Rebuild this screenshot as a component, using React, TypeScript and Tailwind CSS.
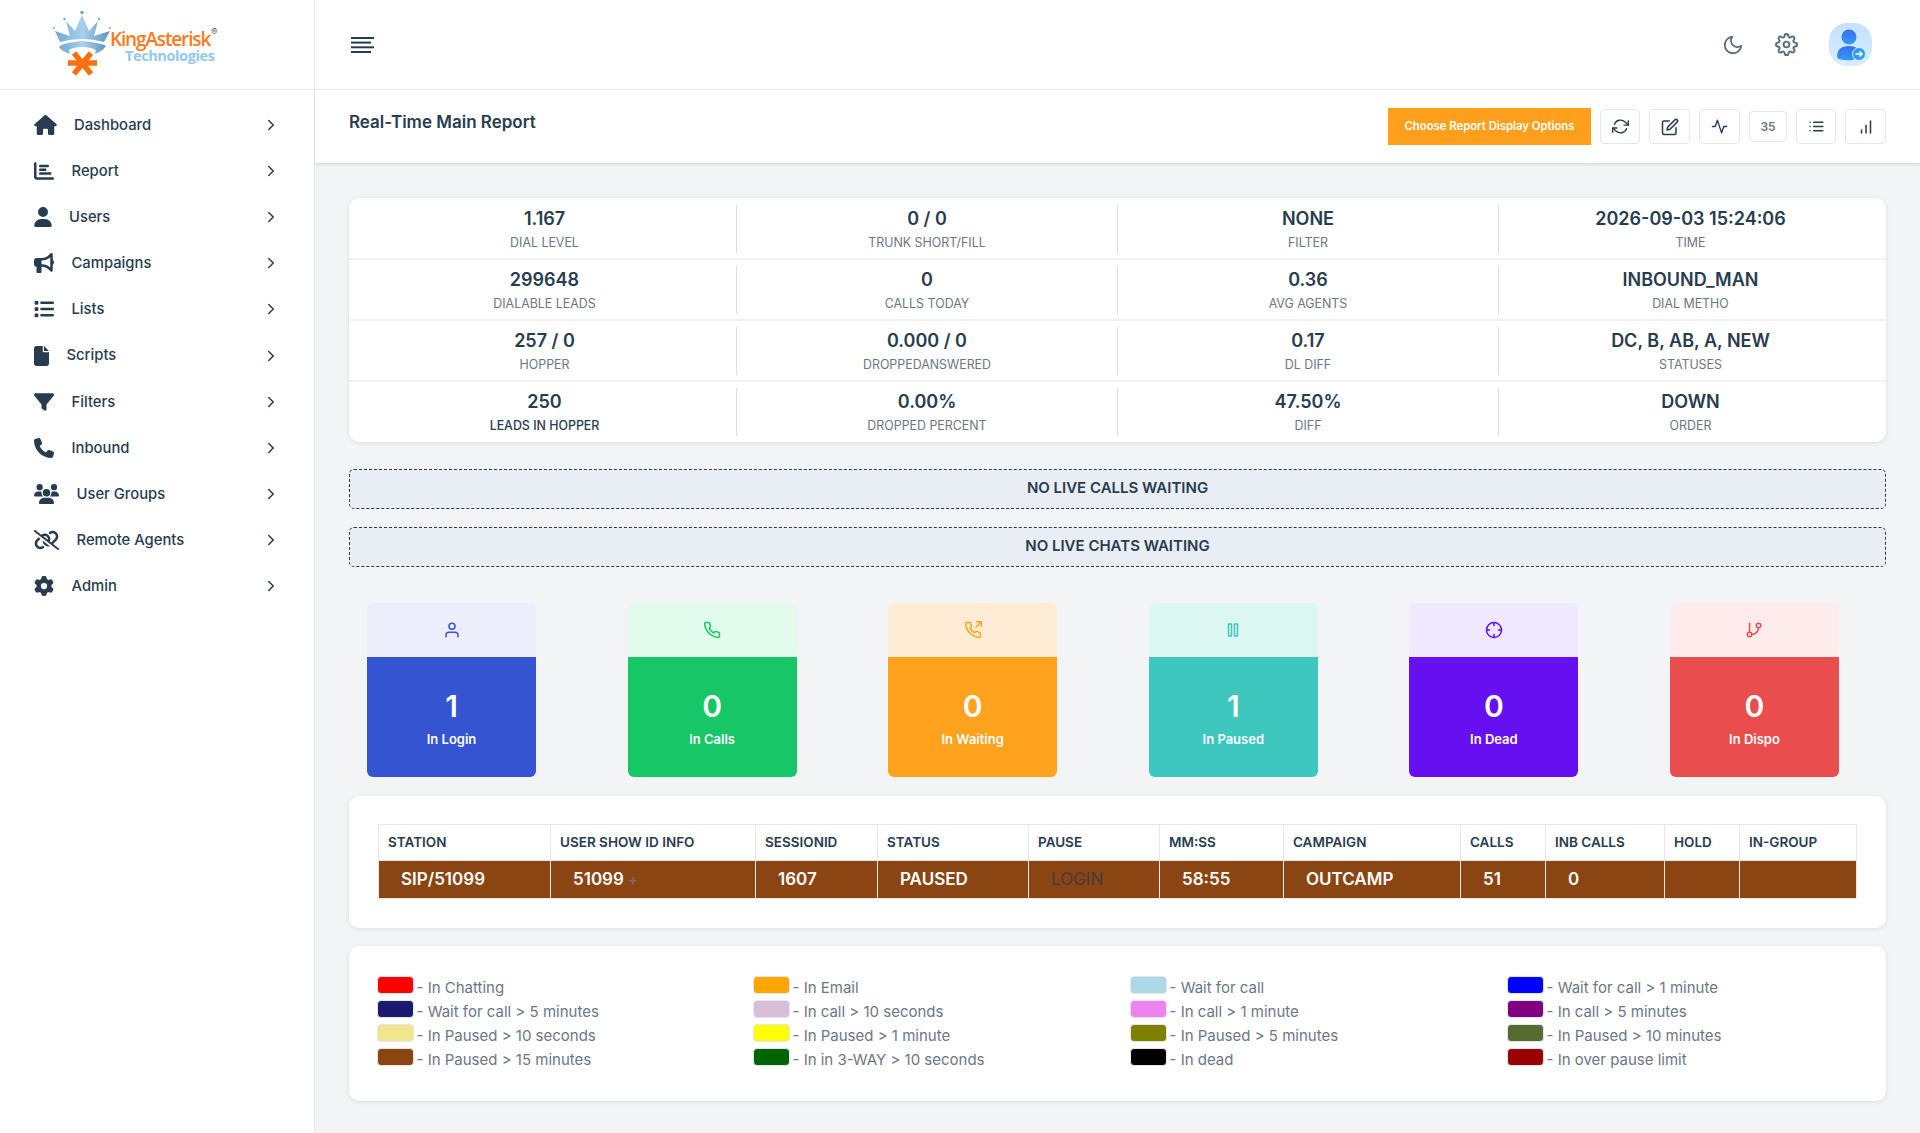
import { ChevronRight } from 'lucide-react';
import {
  FaBullhorn, FaChartBar, FaFile, FaFilter, FaGear, FaHouse, FaLinkSlash, FaList, FaPhone, FaUser, FaUsers,
} from 'react-icons/fa6';
import {
  FiActivity, FiBarChart, FiCrosshair, FiEdit, FiGitBranch, FiList, FiMoon, FiPause, FiPhone,
  FiPhoneOutgoing, FiRefreshCw, FiSettings, FiUser,
} from 'react-icons/fi';

const menu = [
  { label: 'Dashboard', icon: <FaHouse className="h-[20px] w-[23px]" />, textClass: 'ml-[40px]' },
  { label: 'Report', icon: <FaChartBar className="h-[20px] w-[20px]" />, textClass: 'ml-[37.5px]' },
  { label: 'Users', icon: <FaUser className="h-[20px] w-[18px]" />, textClass: 'ml-[35px]' },
  { label: 'Campaigns', icon: <FaBullhorn className="h-[20px] w-[20px]" />, textClass: 'ml-[37.5px]' },
  { label: 'Lists', icon: <FaList className="h-[20px] w-[20px]" />, textClass: 'ml-[37.5px]' },
  { label: 'Scripts', icon: <FaFile className="h-[20px] w-[15px]" />, textClass: 'ml-[32.5px]' },
  { label: 'Filters', icon: <FaFilter className="h-[20px] w-[20px]" />, textClass: 'ml-[37.5px]' },
  { label: 'Inbound', icon: <FaPhone className="h-[20px] w-[20px]" />, textClass: 'ml-[37.5px]' },
  { label: 'User Groups', icon: <FaUsers className="h-[20px] w-[25px]" />, textClass: 'ml-[42.5px]' },
  { label: 'Remote Agents', icon: <FaLinkSlash className="h-[20px] w-[25px]" />, textClass: 'ml-[42.5px]' },
  { label: 'Admin', icon: <FaGear className="h-[20px] w-[20px]" />, textClass: 'ml-[37.5px]' },
];

const stats = [
  [['1.167', 'DIAL LEVEL'], ['0 / 0', 'TRUNK SHORT/FILL'], ['NONE', 'FILTER'], ['2026-09-03 15:24:06', 'TIME']],
  [['299648', 'DIALABLE LEADS'], ['0', 'CALLS TODAY'], ['0.36', 'AVG AGENTS'], ['INBOUND_MAN', 'DIAL METHO']],
  [['257 / 0', 'HOPPER'], ['0.000 / 0', 'DROPPEDANSWERED'], ['0.17', 'DL DIFF'], ['DC, B, AB, A, NEW', 'STATUSES']],
  [['250', 'LEADS IN HOPPER'], ['0.00%', 'DROPPED PERCENT'], ['47.50%', 'DIFF'], ['DOWN', 'ORDER']],
];

const tiles = [
  { label: 'In Login', value: '1', icon: <FiUser size={18} />, light: 'bg-[#eceffb] text-[#3454d1]', solid: 'bg-[#3454d1]' },
  { label: 'In Calls', value: '0', icon: <FiPhone size={18} />, light: 'bg-[#e3fbec] text-[#17c666]', solid: 'bg-[#17c666]' },
  { label: 'In Waiting', value: '0', icon: <FiPhoneOutgoing size={18} />, light: 'bg-[#ffecd4] text-[#ffa21d]', solid: 'bg-[#ffa21d]' },
  { label: 'In Paused', value: '1', icon: <FiPause size={18} />, light: 'bg-[#dcf6f2] text-[#3dc7be]', solid: 'bg-[#3dc7be]' },
  { label: 'In Dead', value: '0', icon: <FiCrosshair size={18} />, light: 'bg-[#f0e8fe] text-[#6610f2]', solid: 'bg-[#6610f2]' },
  { label: 'In Dispo', value: '0', icon: <FiGitBranch size={18} />, light: 'bg-[#feecec] text-[#ea4d4d]', solid: 'bg-[#ea4d4d]' },
];

const columns = [
  ['STATION', 172], ['USER SHOW ID INFO', 205], ['SESSIONID', 122], ['STATUS', 151], ['PAUSE', 131], ['MM:SS', 124],
  ['CAMPAIGN', 177], ['CALLS', 85], ['INB CALLS', 119], ['HOLD', 75], ['IN-GROUP', 117],
] as const;

const legend = [
  ['bg-[#ff0000]', 'In Chatting'], ['bg-[#ffa500]', 'In Email'], ['bg-[#add8e6]', 'Wait for call'], ['bg-[#0000ff]', 'Wait for call > 1 minute'],
  ['bg-[#191970]', 'Wait for call > 5 minutes'], ['bg-[#d8bfd8]', 'In call > 10 seconds'], ['bg-[#ee82ee]', 'In call > 1 minute'], ['bg-[#800080]', 'In call > 5 minutes'],
  ['bg-[#f0e68c]', 'In Paused > 10 seconds'], ['bg-[#ffff00]', 'In Paused > 1 minute'], ['bg-[#808000]', 'In Paused > 5 minutes'], ['bg-[#556b2f]', 'In Paused > 10 minutes'],
  ['bg-[#8b4513]', 'In Paused > 15 minutes'], ['bg-[#006400]', 'In in 3-WAY > 10 seconds'], ['bg-[#000000]', 'In dead'], ['bg-[#990000]', 'In over pause limit'],
];

function Logo() {
  return (
    <div className="flex items-start pl-[52px] pt-[10px]">
      <svg width="60" height="66" viewBox="0 0 60 66" className="shrink-0">
        <defs>
          <linearGradient id="crown" x1="0" x2="1" y1="0" y2="0">
            <stop offset="0" stopColor="#6fa8d6" />
            <stop offset="0.5" stopColor="#a9d0ec" />
            <stop offset="1" stopColor="#5f95c4" />
          </linearGradient>
        </defs>
        <circle cx="30" cy="2.5" r="1.8" fill="#6fa8d6" />
        <circle cx="12.5" cy="9" r="1.2" fill="#6fa8d6" />
        <circle cx="47" cy="9" r="1.2" fill="#6fa8d6" />
        <circle cx="2" cy="18" r="1" fill="#6fa8d6" />
        <circle cx="58" cy="18" r="1" fill="#6fa8d6" />
        <path d="M3 21 L18 26 L14 11 L23 21 L30 5 L37 21 L46 11 L42 26 L58 21 L52 32 Q30 26 8 32 Z" fill="url(#crown)" />
        <path d="M7 37 Q10 33 30 31 Q50 33 54 36 Q50 42 42 44 Q49 38 30 37 Q12 38 19 44 Q10 42 7 37 Z" fill="url(#crown)" />
        <g stroke="#ff6f0f" strokeWidth="5.5">
          <line x1="16" y1="53" x2="45" y2="53" />
          <line x1="22" y1="43" x2="39" y2="64" />
          <line x1="39" y1="43" x2="22" y2="64" />
        </g>
      </svg>
      <div className="-ml-[2px] mt-[19px] flex flex-col">
        <div className="flex items-start">
          <span className="font-['Open_Sans',sans-serif] text-[19px] leading-[20px] font-semibold tracking-[-1.15px] text-[#ff7a1a]">KingAsterisk</span>
          <span className="-mt-[3px] ml-[1px] text-[9px] leading-[12px] text-[#555]">®</span>
        </div>
        <span className="ml-[15px] font-['Open_Sans',sans-serif] text-[14.5px] leading-[14px] font-bold tracking-[-0.4px] text-[#93c8ee]">Technologies</span>
      </div>
    </div>
  );
}

function Sidebar() {
  return (
    <aside className="w-[315px] shrink-0 border-r border-[#e5e7eb] bg-white">
      <div className="h-[90px] border-b border-[#e5e7eb]">
        <Logo />
      </div>
      <nav className="pt-[12px]">
        {menu.map((item) => (
          <div key={item.label} className="relative flex h-[46.1px] items-center pl-[34px] pr-[34px] text-[#283c50]">
            <span className="absolute left-[34px] top-1/2 -translate-y-1/2">{item.icon}</span>
            <span className={`${item.textClass} text-[14.8px] font-medium`}>{item.label}</span>
            <ChevronRight size={18} strokeWidth={2} className="ml-auto" />
          </div>
        ))}
      </nav>
    </aside>
  );
}

function IconButton({ children, className }: { children: React.ReactNode; className: string }) {
  return (
    <button className={`flex items-center justify-center rounded-[4px] border border-[#e5e7eb] bg-white text-[#283c50] ${className}`}>
      {children}
    </button>
  );
}

function Avatar() {
  return (
    <div className="flex h-[43px] w-[43px] items-center justify-center rounded-[18px] bg-gradient-to-b from-[#c4e1ff] to-[#d8edff]">
      <svg width="32" height="34" viewBox="0 0 32 34">
        <defs>
          <linearGradient id="person" x1="0" x2="0" y1="0" y2="1">
            <stop offset="0" stopColor="#3c6cf0" />
            <stop offset="1" stopColor="#2f9df7" />
          </linearGradient>
        </defs>
        <circle cx="14" cy="9" r="7.5" fill="url(#person)" />
        <path d="M2 29 Q2 18 14 18 Q24 18 26 26 L18 32 Q4 33 2 29 Z" fill="url(#person)" />
        <circle cx="24" cy="26" r="6.5" fill="#2f9df7" stroke="#d8edff" strokeWidth="1" />
        <path d="M20.5 26 H27 M24.5 23.5 L27 26 L24.5 28.5" stroke="#fff" strokeWidth="1.6" fill="none" />
      </svg>
    </div>
  );
}

export default function App() {
  return (
    <div className="flex min-h-[1133px] bg-[#f3f4f6] font-['Inter',sans-serif]">
      <Sidebar />
      <div className="min-w-0 flex-1">
        <header className="flex h-[90px] items-center border-b border-[#e5e7eb] bg-white pl-[36px] pr-[48px]">
          <svg width="24" height="18" viewBox="0 0 24 18" className="text-[#283c50]">
            <g stroke="currentColor" strokeWidth="2">
              <line x1="0" y1="2" x2="23" y2="2" />
              <line x1="0" y1="6.6" x2="20" y2="6.6" />
              <line x1="0" y1="11.3" x2="23" y2="11.3" />
              <line x1="0" y1="16" x2="20" y2="16" />
            </g>
          </svg>
          <div className="ml-auto flex items-center text-[#5b6b7e]">
            <FiMoon size={22} />
            <FiSettings size={23} className="ml-[31px]" />
            <div className="ml-[31px]"><Avatar /></div>
          </div>
        </header>

        <div className="flex h-[73px] items-start bg-white px-[34px] shadow-[0_2px_3px_rgba(40,60,80,0.12)]">
          <h1 className="mt-[20px] text-[17px] leading-[24px] font-semibold text-[#283c50]">Real-Time Main Report</h1>
          <div className="ml-auto mt-[18px] flex items-center">
            <button className="h-[37px] w-[203px] bg-[#ff9f1c] text-[11.3px] font-semibold text-white">Choose Report Display Options</button>
            <IconButton className="ml-[9px] h-[35px] w-[40px]"><FiRefreshCw size={17} /></IconButton>
            <IconButton className="ml-[9px] h-[35px] w-[41px]"><FiEdit size={18} /></IconButton>
            <IconButton className="ml-[9px] h-[35px] w-[41px]"><FiActivity size={17} /></IconButton>
            <IconButton className="ml-[9px] h-[31px] w-[38px] text-[12px] font-semibold"><span className="text-[#6b7785]">35</span></IconButton>
            <IconButton className="ml-[9px] h-[35px] w-[40px]"><FiList size={17} /></IconButton>
            <IconButton className="ml-[9px] h-[35px] w-[41px]"><FiBarChart size={18} /></IconButton>
          </div>
        </div>

        <main className="px-[34px] pt-[35px]">
          <section className="rounded-[10px] bg-white pt-[1px] shadow-[0_1px_4px_rgba(40,60,80,0.12)]">
            {stats.map((row, r) => (
              <div key={r} className={`grid grid-cols-[388px_381px_381px_1fr] pt-[6px] ${r < 3 ? 'h-[61px] border-b-2 border-[#f0f1f3]' : 'h-[60px]'}`}>
                {row.map(([value, label], c) => (
                  <div key={label} className={`h-[48px] text-center ${c < 3 ? 'border-r border-[#d9dce1]' : ''} ${c === 0 ? 'pl-[4px]' : ''} ${c === 3 ? 'pr-[4px]' : ''}`}>
                    <div className="pt-[0.5px] text-[18px] leading-[26px] font-semibold text-[#283c50]">{value}</div>
                    <div className={`-mt-[0.5px] text-[12.4px] leading-[24px] ${label === 'LEADS IN HOPPER' ? 'font-medium text-[#283c50]' : 'text-[#6b7785]'}`}>{label}</div>
                  </div>
                ))}
              </div>
            ))}
          </section>

          <div className="mt-[27px] flex h-[40px] items-center justify-center rounded-[5px] border border-dashed border-[#283c50] bg-[#e9eef4] pb-[1px] text-[15px] font-semibold text-[#283c50]">NO LIVE CALLS WAITING</div>
          <div className="mt-[18px] flex h-[40px] items-center justify-center rounded-[5px] border border-dashed border-[#283c50] bg-[#e9eef4] pb-[1px] text-[15px] font-semibold text-[#283c50]">NO LIVE CHATS WAITING</div>

          <section className="mt-[36px] flex justify-between pl-[18px] pr-[47px]">
            {tiles.map((tile) => (
              <div key={tile.label} className="h-[174px] w-[169px] overflow-hidden rounded-[6px]">
                <div className={`flex h-[54px] items-center justify-center ${tile.light}`}>{tile.icon}</div>
                <div className={`flex h-[120px] flex-col items-center pt-[31px] text-white ${tile.solid}`}>
                  <div className="text-[30px] leading-[36px] font-semibold">{tile.value}</div>
                  <div className="mt-[5px] text-[13px] leading-[20px] font-semibold">{tile.label}</div>
                </div>
              </div>
            ))}
          </section>

          <section className="mt-[19px] h-[132px] rounded-[10px] bg-white px-[29px] pt-[28px] shadow-[0_1px_4px_rgba(40,60,80,0.12)]">
            <table className="w-[1478px] table-fixed border-collapse">
              <colgroup>
                {columns.map(([name, width]) => <col key={name} width={width} />)}
              </colgroup>
              <thead>
                <tr className="h-[36px]">
                  {columns.map(([name]) => (
                    <th key={name} className="border border-[#e5e7eb] pl-[9px] text-left text-[13.5px] font-semibold whitespace-nowrap text-[#283c50]">{name}</th>
                  ))}
                </tr>
              </thead>
              <tbody>
                <tr className="h-[38px] bg-[#8b4513] text-[17px] font-semibold text-white">
                  <td className="border border-[#e5e7eb] pl-[22px]">SIP/51099</td>
                  <td className="border border-[#e5e7eb] pl-[22px]">51099 <span className="text-[14px] text-[#7d6c70]">+</span></td>
                  <td className="border border-[#e5e7eb] pl-[22px]">1607</td>
                  <td className="border border-[#e5e7eb] pl-[22px]">PAUSED</td>
                  <td className="border border-[#e5e7eb] pl-[22px] font-normal text-[#453a45]">LOGIN</td>
                  <td className="border border-[#e5e7eb] pl-[22px]">58:55</td>
                  <td className="border border-[#e5e7eb] pl-[22px]">OUTCAMP</td>
                  <td className="border border-[#e5e7eb] pl-[22px]">51</td>
                  <td className="border border-[#e5e7eb] pl-[22px]">0</td>
                  <td className="border border-[#e5e7eb]"></td>
                  <td className="border border-[#e5e7eb]"></td>
                </tr>
              </tbody>
            </table>
          </section>

          <section className="mt-[18px] grid h-[155px] grid-cols-[376px_377px_377px_1fr] content-start rounded-[10px] bg-white pl-[27.5px] pt-[30px] shadow-[0_1px_4px_rgba(40,60,80,0.12)]">
            {legend.map(([color, text]) => (
              <div key={text} className="flex h-[24px] items-start">
                <span className={`h-[18px] w-[37px] shrink-0 rounded-[4px] border-[1.5px] border-[#e3e6ee] ${color}`} />
                <span className="ml-[3px] text-[15px] leading-[24px] text-[#6b7785]">- {text}</span>
              </div>
            ))}
          </section>
        </main>
      </div>
    </div>
  );
}
